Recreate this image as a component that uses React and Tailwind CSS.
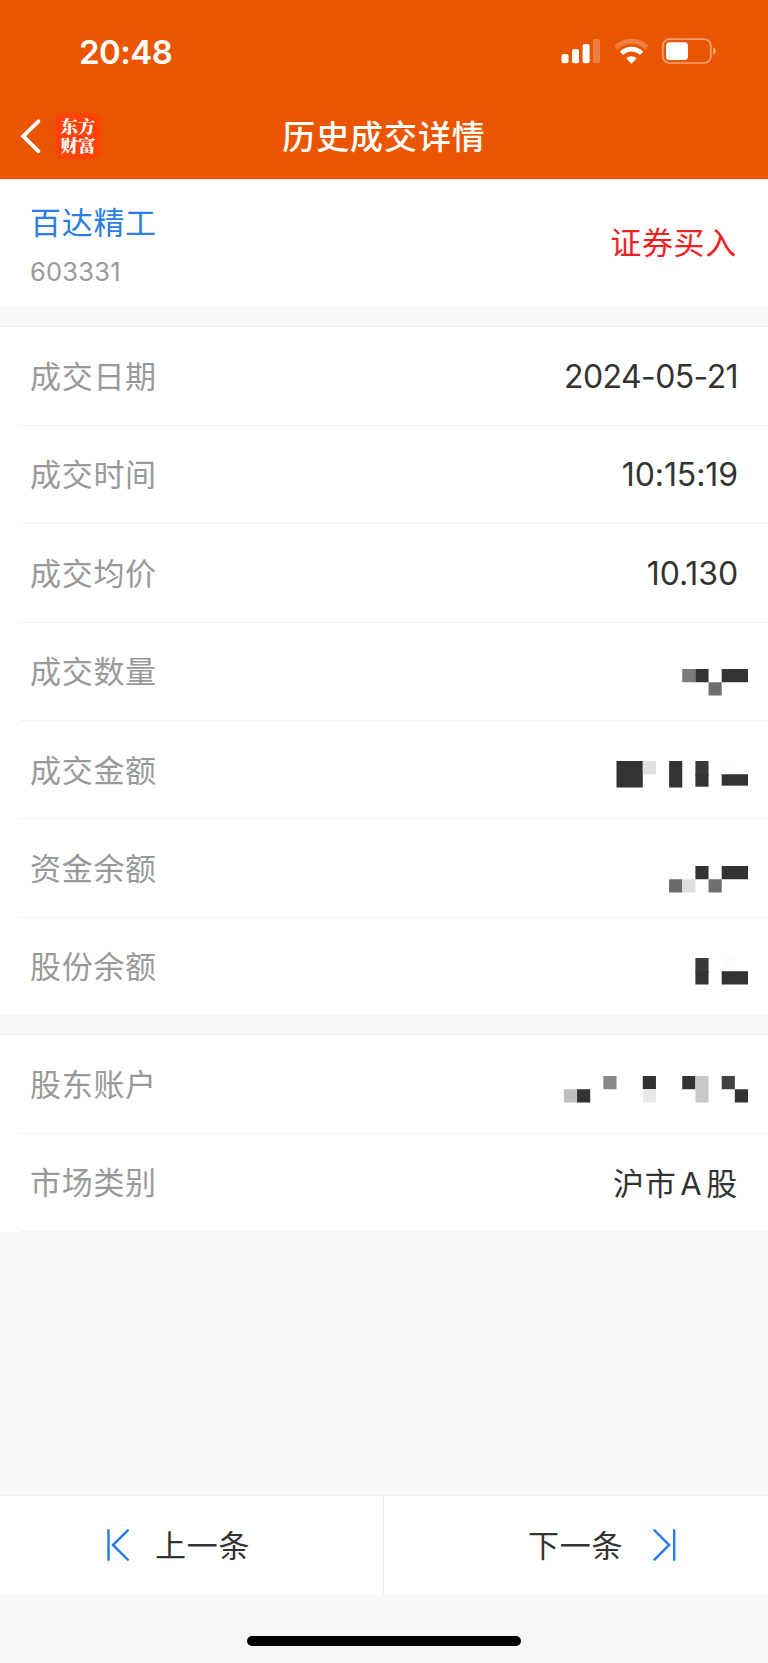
import React from "react";

const INK = "#333333";

// Censored values are drawn as blocks on a 13.15px grid, counted from the right edge.
// Each block: [columns from right, row, width, height, colour]
const masks = {
  quantity: [
    [5, 0, 1, 1, "#7b7b7b"],
    [4, 0, 1, 1, INK],
    [3, 1, 1, 1, "#6f6f6f"],
    [2, 0, 2, 1, INK],
  ],
  amount: [
    [10, 0, 2, 2, INK],
    [8, 0, 1, 1, "#e1e1e1"],
    [6, 0, 1, 2, INK],
    [4, 0, 1, 1.1, "#393939"],
    [4, 1, 1, 0.94, INK],
    [2, 0, 1, 1, "#fcfcfc"],
    [2, 1, 2, 0.86, INK],
  ],
  balance: [
    [6, 1, 1, 1, "#6a6a6a"],
    [5, 1, 1, 1, "#dedede"],
    [4, 0, 1, 1, INK],
    [3, 1, 1, 1, "#6f6f6f"],
    [2, 0, 2, 1, INK],
  ],
  shares: [
    [4, 0, 1, 1.1, "#393939"],
    [4, 1, 1, 1, INK],
    [2, 0, 1, 1, "#fcfcfc"],
    [2, 1, 2, 1, INK],
  ],
  account: [
    [14, 1, 1, 1, "#bfbfbf"],
    [13, 1, 1, 1, INK],
    [11, 0, 1, 1, "#888888"],
    [8, 0, 1, 1, INK],
    [8, 1, 1, 1, "#e9e9e9"],
    [5, 0, 1, 1, INK],
    [4, 0, 1, 2, "#c8c8c8"],
    [2, 0, 1, 1, "#424242"],
    [1, 1, 1, 1, INK],
  ],
};

function Mask({ name }) {
  const u = 13.15;
  return (
    <svg className="-mr-[11px] h-[28px] w-[186px]" viewBox="0 0 186 28" aria-hidden="true">
      {masks[name].map(([c, r, w, h, fill], i) => (
        <rect key={i} x={186 - c * u} y={r * 13.25} width={w * u} height={h * 13.25} fill={fill} />
      ))}
    </svg>
  );
}

function Row({ label, children, last, maskTop }) {
  return (
    <div className={"h-[98.4px] " + (last ? "" : "pl-5")}>
      <div
        className={
          "flex h-full justify-between border-b pr-[31px] " +
          (last ? "border-[#efeff1] pl-[30px]" : "border-[#f3f3f4] pl-[10px]") +
          (maskTop ? "" : " items-center")
        }
      >
        <span className="flex h-full items-center pb-[3px] text-[31px] tracking-[0.7px] text-[#999999]">{label}</span>
        {maskTop ? <div className={maskTop}>{children}</div> : children}
      </div>
    </div>
  );
}

function Value({ children, className }) {
  return (
    <span className={"mr-[-1px] pt-[2px] font-['Inter','Noto_Sans_CJK_SC',sans-serif] text-[#333333] " + className}>
      {children}
    </span>
  );
}

function StatusBar() {
  return (
    <div className="flex h-[101px] items-center justify-between pt-[2px] pr-[52px] pl-[79px]">
      <span className="pt-[1px] font-['Inter',sans-serif] text-[33px] font-semibold tracking-[-0.5px] text-white">20:48</span>
      <svg className="h-[28px] w-[156px]" viewBox="0 0 156 28" fill="none" aria-hidden="true">
        <g fill="#fff">
          <rect x="1.5" y="16" width="7" height="9.3" rx="2" />
          <rect x="12" y="11" width="7" height="14.3" rx="2" />
          <rect x="22.6" y="6" width="7" height="19.3" rx="2" />
          <rect x="33" y="1" width="7" height="24.3" rx="2" opacity=".25" />
        </g>
        <path d="M56 9.8C64.5 1.2 78.5 1.2 87 9.8" stroke="#fff" strokeWidth="5" opacity=".25" />
        <path d="M61.5 15.3C67 9.7 76 9.7 81.5 15.3" stroke="#fff" strokeWidth="4.6" />
        <path d="M66.3 20.3C69.2 17.4 73.8 17.4 76.7 20.3L71.5 25.7Z" fill="#fff" />
        <rect x="102.8" y="1.2" width="48" height="23.8" rx="6.5" stroke="#fff" strokeWidth="1.7" opacity=".45" />
        <rect x="106" y="4.3" width="22" height="17.8" rx="3.6" fill="#fff" />
        <path d="M153.3 9.3C156.6 10.4 156.6 15.8 153.3 16.9Z" fill="#fff" opacity=".5" />
      </svg>
    </div>
  );
}

function NavBar() {
  return (
    <div className="grid h-[78px] grid-cols-[1fr_auto_1fr] items-center">
      <div className="flex items-center pl-5">
        <svg className="mt-[-8px] h-[36px] w-[22px]" viewBox="0 0 22 36" fill="none" aria-hidden="true">
          <path d="M18.4 3.3L3.2 18.2L18.4 33.1" stroke="#fff" strokeWidth="3.9" strokeLinecap="round" strokeLinejoin="miter" />
        </svg>
        <div className="mt-[-9px] ml-[13px] flex h-[46px] w-[46px] items-center justify-center rounded-[8px] bg-[#ff4208]">
          <p className="mt-[-1px] w-[36px] text-center font-['Noto_Serif_CJK_SC','Noto_Sans_CJK_SC',serif] text-[17.5px] leading-[19.5px] font-black text-white">
            东方财富
          </p>
        </div>
      </div>
      <h1 className="mt-[-9px] text-[33px] font-medium tracking-[0.9px] text-white">历史成交详情</h1>
      <div />
    </div>
  );
}

export default function App() {
  return (
    <div className="flex h-[1663px] w-[768px] flex-col bg-[#f7f7fa] font-['Noto_Sans_CJK_SC',sans-serif] leading-none">
      <header className="h-[179px] bg-[#ea5500]">
        <StatusBar />
        <NavBar />
      </header>

      <section className="flex h-[128px] items-center justify-between border-t border-[#ece4df] bg-white pr-[31px] pl-[30px]">
        <div className="flex flex-col pt-[3px]">
          <span className="text-[31px] tracking-[0.7px] text-[#2b7de9]">百达精工</span>
          <span className="mt-[23px] font-['Inter',sans-serif] text-[25.5px] tracking-[0.2px] text-[#999999]">603331</span>
        </div>
        <span className="pb-[6px] text-[31px] tracking-[0.7px] text-[#f01e1e]">证券买入</span>
      </section>

      <section className="mt-[19.4px] border-t border-[#efeff1] bg-white">
        <Row label="成交日期"><Value className="text-[32px] tracking-[-0.6px]">2024-05-21</Value></Row>
        <Row label="成交时间"><Value className="text-[32px] tracking-[-0.1px]">10:15:19</Value></Row>
        <Row label="成交均价"><Value className="text-[32px] tracking-[-0.1px]">10.130</Value></Row>
        <Row label="成交数量" maskTop="pt-[46.5px]"><Mask name="quantity" /></Row>
        <Row label="成交金额" maskTop="pt-[40px]"><Mask name="amount" /></Row>
        <Row label="资金余额" maskTop="pt-[47px]"><Mask name="balance" /></Row>
        <Row label="股份余额" maskTop="pt-[40.5px]" last><Mask name="shares" /></Row>
      </section>

      <section className="mt-[18px] border-t border-[#efeff1] bg-white">
        <Row label="股东账户" maskTop="pt-[40.5px]"><Mask name="account" /></Row>
        <Row label="市场类别">
          <Value className="text-[31px] tracking-[0.7px] [word-spacing:-5.5px]">沪市 A 股</Value>
        </Row>
      </section>

      <div className="grow" />

      <nav className="grid h-[100px] shrink-0 grid-cols-[384px_384px] border-t border-[#efeff1] bg-white text-[31px] tracking-[0.7px] text-[#333333]">
        <button className="flex items-center border-r border-[#ececee] pl-[105px]">
          <svg className="mt-[-1px] h-[34px] w-[26px]" viewBox="0 0 26 34" fill="none" stroke="#2b7de9" strokeWidth="2.5" aria-hidden="true">
            <path d="M3.5 2.3V31.7M22.8 2.3L8 17L22.8 31.7" strokeLinecap="round" />
          </svg>
          <span className="ml-[24px] pb-[4px]">上一条</span>
        </button>
        <button className="flex items-center pl-[144px]">
          <span className="pb-[4px]">下一条</span>
          <svg className="mt-[-1px] ml-[28px] h-[34px] w-[26px]" viewBox="0 0 26 34" fill="none" stroke="#2b7de9" strokeWidth="2.5" aria-hidden="true">
            <path d="M23.2 2.3V31.7M3.5 2.3L18.2 17L3.5 31.7" strokeLinecap="round" />
          </svg>
        </button>
      </nav>

      <footer className="flex h-[68px] shrink-0 justify-center pt-[41px]">
        <div className="h-[10px] w-[274px] rounded-full bg-black" />
      </footer>
    </div>
  );
}
